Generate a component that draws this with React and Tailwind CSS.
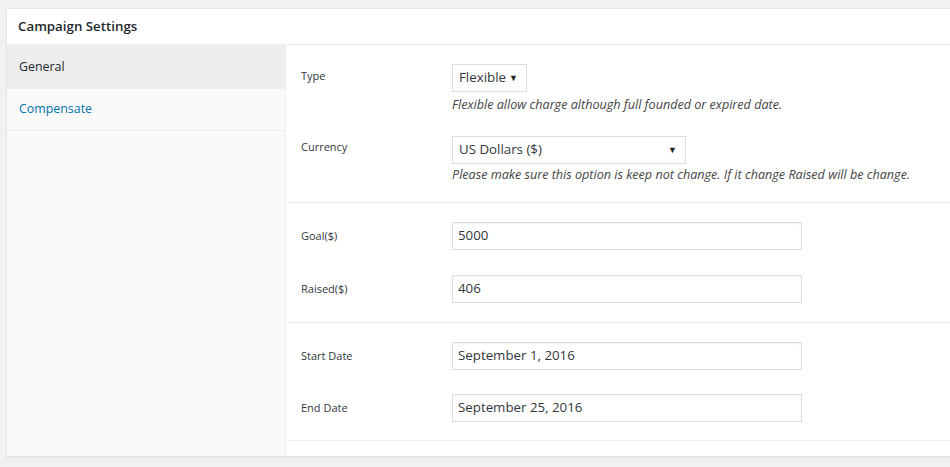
const font = { fontFamily: '"Open Sans", "Noto Sans", sans-serif' }

function Row({ label, children, top = 'pt-[6px]' }) {
  return (
    <div className="flex items-start">
      <div className={`w-[166px] shrink-0 pl-[15px] text-[11px] text-[#32373c] ${top}`}>{label}</div>
      <div className="flex-1">{children}</div>
    </div>
  )
}

function FakeSelect({ value, width }) {
  return (
    <div
      className={`flex items-center justify-between h-[28px] border border-[#dddddd] bg-white pl-[6px] pr-[8px] text-[13.3px] text-[#32373c] ${width}`}
    >
      <span>{value}</span>
      <span className="text-[9px] text-[#222]">▼</span>
    </div>
  )
}

function TextInput({ value }) {
  return (
    <div className="flex items-center h-[28px] w-[350px] border border-[#dddddd] bg-white px-[5px] text-[13.3px] text-[#32373c] shadow-[inset_0_1px_2px_rgba(0,0,0,0.04)]">
      {value}
    </div>
  )
}

export default function App() {
  return (
    <div className="w-[950px] h-[467px] overflow-hidden bg-[#f1f1f1] pt-[8px] pl-[6px]" style={font}>
      <div className="w-[960px] h-[449px] bg-white border border-[#e5e5e5] shadow-[0_1px_1px_rgba(0,0,0,0.04)] flex flex-col">
        {/* Header */}
        <div className="h-[36px] shrink-0 flex items-center pl-[11px] border-b border-[#eeeeee]">
          <h2 className="text-[13.3px] font-semibold text-[#23282d]">Campaign Settings</h2>
        </div>

        <div className="flex flex-1">
          {/* Tabs */}
          <div className="w-[279px] shrink-0 bg-[#fafafa] border-r border-[#eeeeee]">
            <div className="h-[44px] flex items-center pl-[12px] bg-[#eeeeee] text-[12.4px] text-[#23282d]">General</div>
            <div className="h-[42px] flex items-center pl-[12px] border-b border-[#eeeeee] text-[12.4px] text-[#0073aa]">Compensate</div>
          </div>

          {/* Fields */}
          <div className="flex-1 flex flex-col">
            <div className="border-b border-[#eeeeee] pt-[19px] pb-[17px] flex flex-col gap-[21px]">
              <Row label="Type" top="pt-[4px]">
                <FakeSelect value="Flexible" width="w-[75px]" />
                <p className="mt-[4px] text-[12.6px] italic text-[#444]">Flexible allow charge although full founded or expired date.</p>
              </Row>
              <Row label="Currency" top="pt-[3px]">
                <FakeSelect value="US Dollars ($)" width="w-[234px]" />
                <p className="mt-[2px] text-[12.6px] italic text-[#444]">
                  Please make sure this option is keep not change. If it change Raised will be change.
                </p>
              </Row>
            </div>

            <div className="border-b border-[#eeeeee] pt-[19px] pb-[19px] flex flex-col gap-[25px]">
              <Row label="Goal($)">
                <TextInput value="5000" />
              </Row>
              <Row label="Raised($)">
                <TextInput value="406" />
              </Row>
            </div>

            <div className="border-b border-[#eeeeee] pt-[19px] pb-[18px] flex flex-col gap-[24px]">
              <Row label="Start Date">
                <TextInput value="September 1, 2016" />
              </Row>
              <Row label="End Date">
                <TextInput value="September 25, 2016" />
              </Row>
            </div>
          </div>
        </div>
      </div>
    </div>
  )
}
